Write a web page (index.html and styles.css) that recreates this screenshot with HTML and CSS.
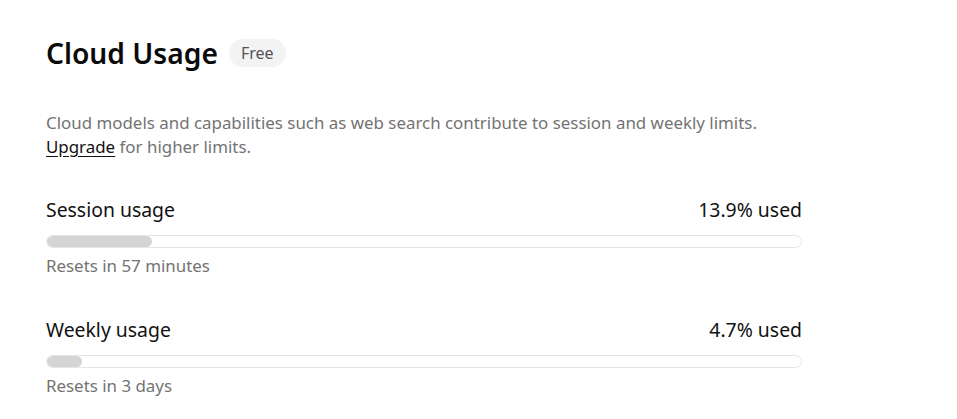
FILE: index.html
```html
<!DOCTYPE html>
<html>
<head>
<meta charset="utf-8">
<link rel="stylesheet" href="styles.css">
</head>
<body>
<main class="page">
  <header class="head">
    <h1 class="title">Cloud Usage</h1>
    <span class="badge">Free</span>
  </header>
  <p class="desc">Cloud models and capabilities such as web search contribute to session and weekly limits.<br><a class="link" href="#">Upgrade</a> for higher limits.</p>
  <section class="usage">
    <div class="row">
      <span class="label">Session usage</span>
      <span class="value">13.9% used</span>
    </div>
    <div class="bar"><div class="fill" style="width:13.9%"></div></div>
    <div class="reset">Resets in 57 minutes</div>
  </section>
  <section class="usage">
    <div class="row">
      <span class="label">Weekly usage</span>
      <span class="value">4.7% used</span>
    </div>
    <div class="bar"><div class="fill" style="width:4.7%"></div></div>
    <div class="reset">Resets in 3 days</div>
  </section>
</main>
</body>
</html>
```
FILE: styles.css
```css
* { box-sizing: border-box; }
html, body { margin: 0; background: #fff; }
body { font-family: "Noto Sans", "Open Sans", sans-serif; color: #111; }
.page { width: 756px; margin-left: 46px; padding-top: 34px; }
.head { display: flex; align-items: center; gap: 11px; }
.title { margin: 0; font-size: 28.2px; font-weight: 600; line-height: 38px; color: #0a0a0a; }
.badge { background: #f3f3f3; color: #555; font-size: 16px; line-height: 28px; padding: 0 12px; border-radius: 14px; }
.desc { margin: 39px 0 0; font-size: 16.9px; line-height: 24px; color: #737373; }
.link { color: #111; text-decoration: underline; text-underline-offset: 3px; }
.usage { margin-top: 37px; }
.usage + .usage { margin-top: 38px; }
.row { display: flex; justify-content: space-between; font-size: 19.4px; line-height: 28px; }
.bar { margin-top: 11px; height: 13px; border: 1px solid #e5e5e5; border-radius: 7px; overflow: hidden; }
.fill { height: 100%; background: #d4d4d4; border-radius: 6px; }
.reset { margin-top: 6px; font-size: 16.9px; line-height: 24px; color: #737373; }
```
